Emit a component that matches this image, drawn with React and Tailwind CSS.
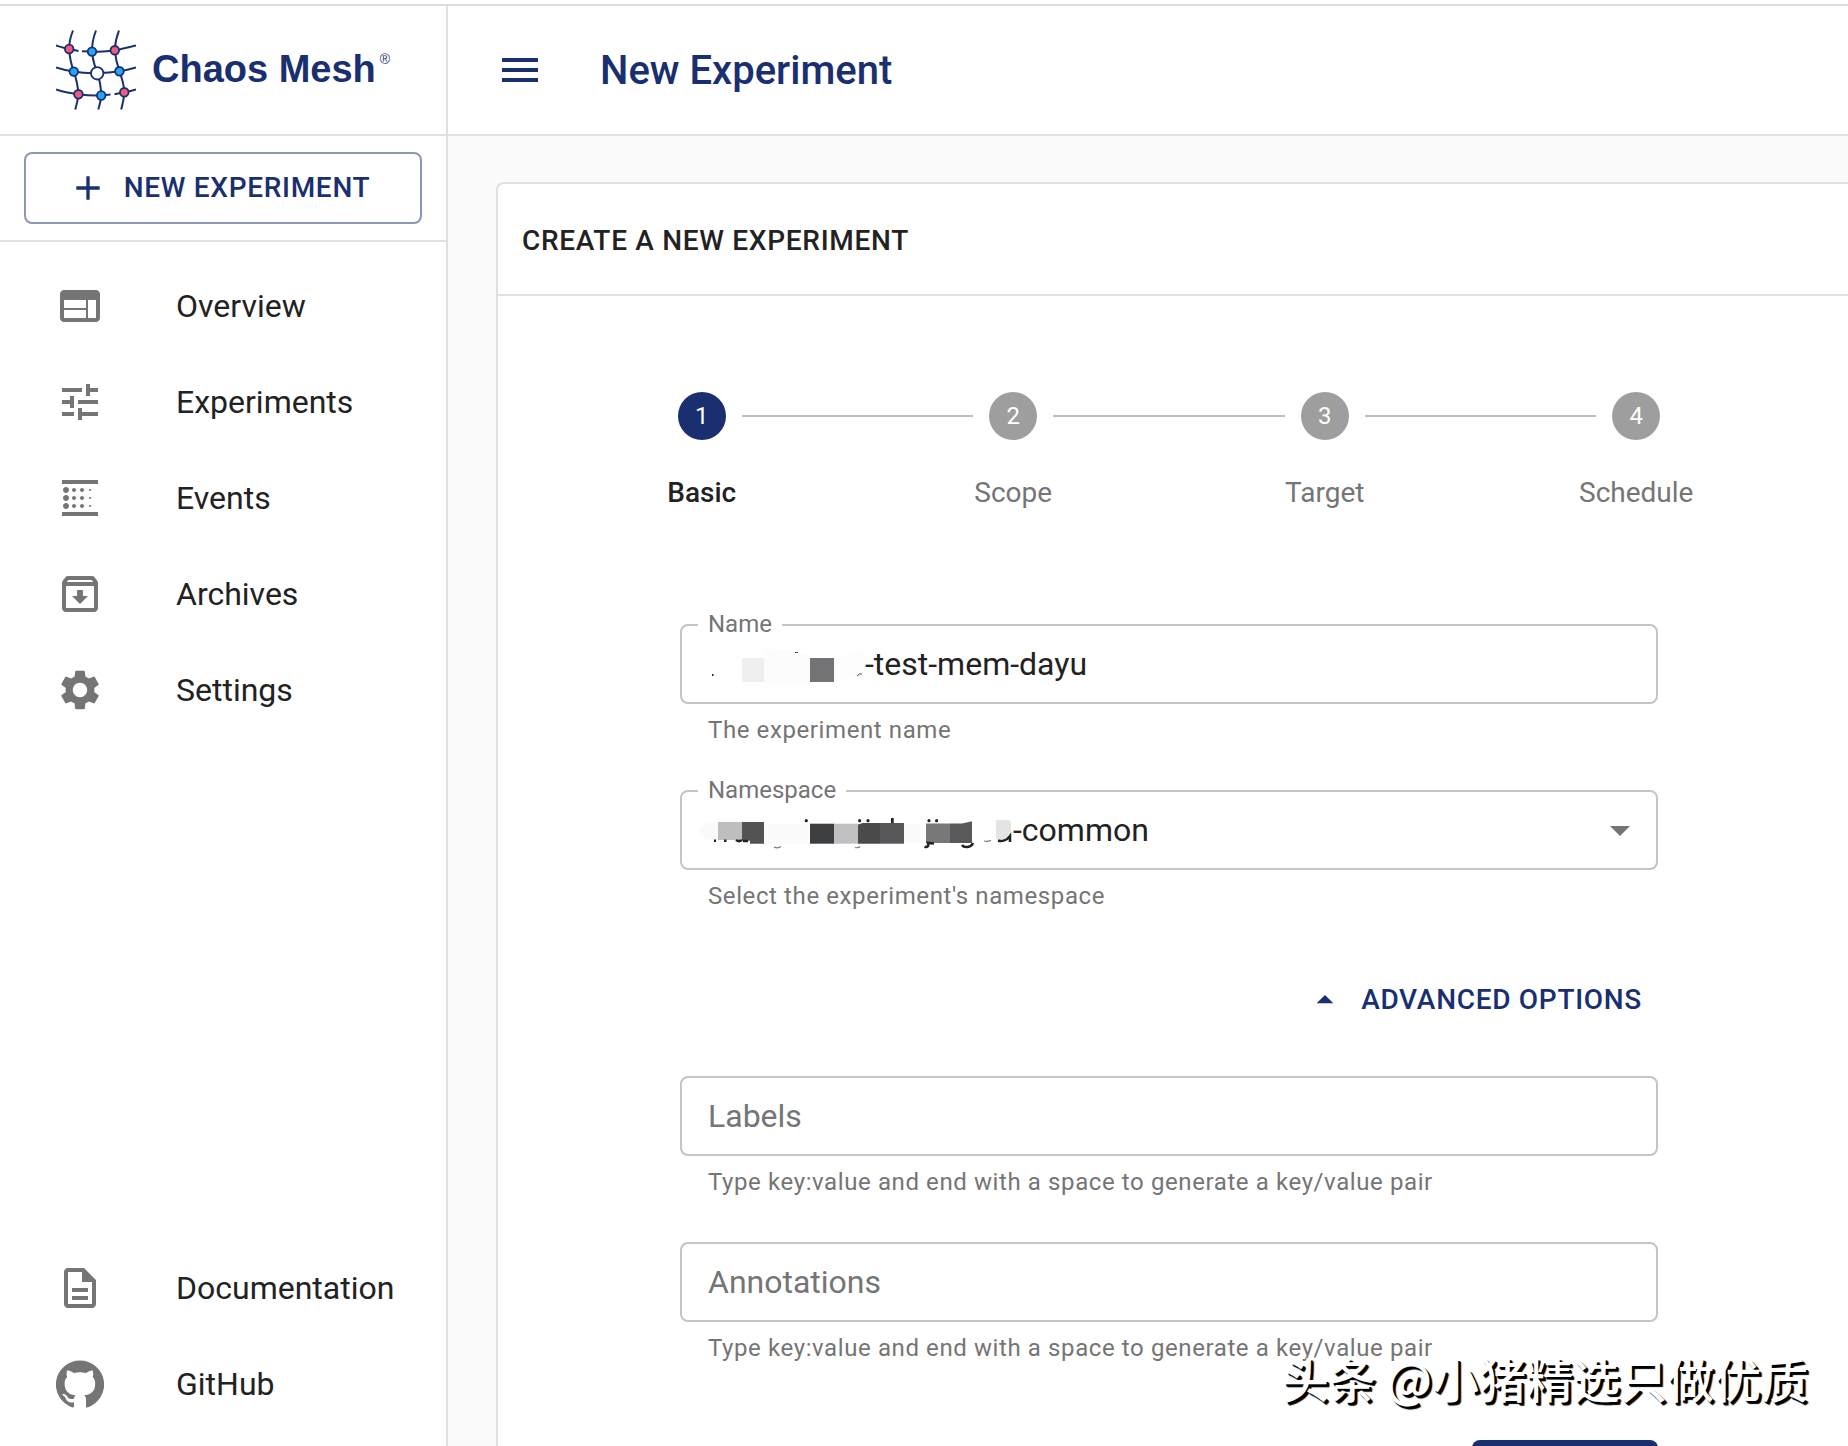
import React from "react";
import {
  MdAdd,
  MdArrowDropDown,
  MdArrowDropUp,
  MdBlurLinear,
  MdMenu,
  MdOutlineArchive,
  MdOutlineDescription,
  MdSettings,
  MdTune,
  MdWeb,
} from "react-icons/md";

function GitHubIcon({ className }) {
  return (
    <svg viewBox="0 0 24 24" className={className} fill="currentColor" aria-hidden="true">
      <path d="M12 .3a12 12 0 0 0-3.8 23.4c.6.1.8-.3.8-.6v-2c-3.3.7-4-1.6-4-1.6-.6-1.4-1.4-1.8-1.4-1.8-1-.7.1-.7.1-.7 1.2 0 1.9 1.2 1.9 1.2 1 1.8 2.8 1.3 3.5 1 0-.8.4-1.3.7-1.6-2.7-.3-5.5-1.3-5.5-6 0-1.2.5-2.3 1.3-3.1-.2-.4-.6-1.6 0-3.2 0 0 1-.3 3.4 1.2a11.5 11.5 0 0 1 6 0c2.3-1.5 3.3-1.2 3.3-1.2.6 1.6.2 2.8 0 3.2.9.8 1.3 1.9 1.3 3.2 0 4.6-2.8 5.6-5.5 5.9.5.4.9 1 .9 2.2v3.3c0 .3.1.7.8.6A12 12 0 0 0 12 .3" />
    </svg>
  );
}

const PINK = "#f2597f";
const BLUE = "#25a5f7";

const knots = [
  [29.2, 29, 4.3, PINK],
  [52, 31.6, 4.3, BLUE],
  [74.8, 30.3, 4.3, PINK],
  [33.8, 51.6, 4.3, BLUE],
  [57.2, 53.3, 6.2, "#fff"],
  [79.4, 51.3, 4.3, BLUE],
  [38.4, 74.3, 4.3, PINK],
  [61.2, 75.5, 4.3, BLUE],
  [84.3, 72.3, 4.3, PINK],
];

function Logo() {
  return (
    <svg viewBox="16 10 80 80" className="size-20 shrink-0" fill="none" stroke="#1a2f6f" strokeWidth="2" aria-hidden="true">
      <path d="M33 10.500C30 18 29 24 29.200 29C29.600 37 31 44 33.800 51.600C36 58 38 66 38.400 74.300C38 81 36.500 85 35.200 89.500" />
      <path d="M56 10.500C53 18 52 25 52 31.600C52.500 40 55 46 57.200 53.300C60 60 61 68 61.200 75.500C61 81 59.500 85 58.300 89.500" />
      <path d="M79 10.500C76 18 75 24 74.800 30.300C75.500 38 77 44 79.400 51.300C82 58 84 65 84.300 72.300C84 80 82.500 85 81.200 89.500" />
      <path d="M16 25.500C21 27 25 28.300 29.200 29L38.500 31M42 31.200L52 31.600C60 32 68 31.600 74.800 30.300C82 29 89 27.300 96 25.500" />
      <path d="M16 47.500C22 49.500 28 50.700 33.800 51.600C41 53 49 53.500 57.200 53.300C65 53 73 52.300 79.400 51.300C85 50.400 91 49 96 47.500" />
      <path d="M16 69.500C23 72 30 73.300 38.400 74.300C46 75.400 54 75.800 61.200 75.500L70.500 74.600M74.500 74.200L84.300 72.300C89 71.500 93 70.500 96 69.500" />
      {knots.map(([cx, cy, r, fill]) => (
        <circle key={cx} cx={cx} cy={cy} r={r} fill={fill} strokeWidth="1.8" />
      ))}
    </svg>
  );
}

function NameMosaic() {
  return (
    <svg viewBox="0 -14 175 76" className="h-[76px] w-[175px] shrink-0" aria-hidden="true">
      <path d="M74 8.500L95 10L120 15V43H74z" fill="#fcfcfc" />
      <path d="M165 12L175 9V34L144 42V18z" fill="#fdfdfd" />
      <rect x="52" y="18" width="22" height="24" fill="#efefef" />
      <rect x="120" y="18" width="24" height="24" fill="#737375" />
      <rect x="22" y="34" width="1.500" height="2" fill="#222" />
      <rect x="105" y="12" width="3" height="1" fill="#444" />
      <path d="M167 36L170 33.500M170 34H172" stroke="#555" />
    </svg>
  );
}

function NamespaceMosaic() {
  return (
    <svg viewBox="0 -8 323 76" className="h-[76px] w-[323px] shrink-0" aria-hidden="true">
      <path d="M28 22C14 22 10 27 10 31C10 36 15 40 28 40z" fill="#fafafa" />
      <rect x="28" y="22" width="24" height="18" fill="#bebebe" />
      <path d="M52 22H74V43.700H60V40.700H52z" fill="#535355" />
      <rect x="74" y="24" width="46" height="20" fill="#fbfbfb" />
      <rect x="214" y="24" width="22" height="19" fill="#fbfbfb" />
      <rect x="120" y="23.700" width="24" height="20" fill="#3e3f41" />
      <rect x="144" y="23.700" width="24" height="20" fill="#c0c0c2" />
      <path d="M168 24.500L173 23H190V43.700H168z" fill="#4b4b4b" />
      <rect x="190" y="23" width="24" height="20.700" fill="#58585a" />
      <rect x="236" y="23.500" width="24" height="19.500" fill="#78787a" />
      <path d="M260 23.500H272L282 21.200V43H260z" fill="#58595b" />
      {[116.300, 169.600, 178, 239, 246.600].map((cx) => (
        <circle key={cx} cx={cx} cy="20.700" r="1.600" fill="#222" />
      ))}
      <rect x="201" y="18" width="2.700" height="5" fill="#222" />
      <g fill="none" stroke="#222" strokeWidth="2.500">
        <path d="M24 40.700H26M34 40.700H36.500M46 40C48 41.500 50 41.500 52 40M53 41H58" />
        <path d="M244 43.500L238 43C239 46.500 237 47.500 234.500 46.700" strokeWidth="2.600" />
        <path d="M272 45C274 48 281 48 283 43" />
        <path d="M308 40.500C312 42 317 40 320 36V42" />
      </g>
      <path d="M84 47C86 48 89 48 91 46.500M165 47.500C167 48 169 47.500 170 46.500M294 41C296 41.500 299 41.200 301 40.500" fill="none" stroke="#777" strokeWidth="1.200" />
      <path d="M306 20H318C320 20 321 22 321 24V32L315 39H306z" fill="#e4e4e4" />
    </svg>
  );
}

const mainLinks = [
  ["Overview", MdWeb],
  ["Experiments", MdTune],
  ["Events", MdBlurLinear],
  ["Archives", MdOutlineArchive],
  ["Settings", MdSettings],
];

const footerLinks = [
  ["Documentation", MdOutlineDescription],
  ["GitHub", GitHubIcon],
];

function NavList({ links }) {
  return (
    <ul className="pt-4 pb-3.5">
      {links.map(([label, Icon]) => (
        <li key={label}>
          <a href="#" className="flex h-24 items-center gap-[72px] pl-14 text-[32px]">
            <Icon className="size-12 shrink-0 text-[#757575]" />
            {label}
          </a>
        </li>
      ))}
    </ul>
  );
}

function Sidebar() {
  return (
    <aside className="flex w-[448px] shrink-0 flex-col border-r-2 border-[#e0e0e0] bg-white">
      <a
        href="#"
        className="flex h-[130px] shrink-0 items-center gap-4 border-b-2 border-[#e0e0e0] pl-14 font-['Liberation_Sans',sans-serif] text-[38px] font-bold text-[#1a2f6f]"
      >
        <Logo />
        <span className="flex items-start gap-1 pb-0.5 leading-10">
          Chaos Mesh
          <span className="text-sm font-normal leading-5">®</span>
        </span>
      </a>
      <div className="border-b-2 border-[#e0e0e0] px-6 py-4">
        <button
          type="button"
          className="flex h-[72px] w-full items-center justify-center gap-4 rounded-lg border-2 border-[#8c97b7] pr-2 text-[28px] font-medium tracking-wide text-[#1a2f6f] uppercase"
        >
          <MdAdd className="size-10" />
          New Experiment
        </button>
      </div>
      <nav className="flex flex-1 flex-col justify-between" aria-label="Main">
        <NavList links={mainLinks} />
        <NavList links={footerLinks} />
      </nav>
    </aside>
  );
}

function Stepper() {
  const steps = ["Basic", "Scope", "Target", "Schedule"];
  return (
    <ol className="grid grid-cols-4">
      {steps.map((step, i) => (
        <li key={step} className="flex flex-col items-center gap-8">
          <div className="flex w-full items-center gap-4">
            <span className={i === 0 ? "flex-1" : "h-0.5 flex-1 bg-[#bdbdbd]"} />
            <span
              className={
                i === 0
                  ? "flex size-12 items-center justify-center rounded-full bg-[#1a2f6f] text-2xl text-white"
                  : "flex size-12 items-center justify-center rounded-full bg-[#9e9e9e] text-2xl text-white"
              }
            >
              {i + 1}
            </span>
            <span className={i === steps.length - 1 ? "flex-1" : "h-0.5 flex-1 bg-[#bdbdbd]"} />
          </div>
          <span className={i === 0 ? "text-[28px] leading-[42px] font-medium" : "text-[28px] leading-[42px] text-[#757575]"}>
            {step}
          </span>
        </li>
      ))}
    </ol>
  );
}

function Field({ id, label, help, children }) {
  return (
    <div>
      <div className="relative flex h-20 items-center rounded-lg border-2 border-[#c4c4c4] text-[32px]">
        {label && (
          <label htmlFor={id} className="absolute -top-5 left-4 bg-white px-2.5 text-2xl leading-9 text-[#757575]">
            {label}
          </label>
        )}
        {children}
      </div>
      <p id={id + "-help"} className="mt-1.5 pl-7 text-2xl leading-10 tracking-wide text-[#757575]">
        {help}
      </p>
    </div>
  );
}

function ExperimentForm() {
  const pairHelp = "Type key:value and end with a space to generate a key/value pair";
  return (
    <form className="mx-auto mt-[110px] w-full max-w-[978px]">
      <div className="flex flex-col gap-10">
        <Field id="name" label="Name" help="The experiment name">
          <div className="flex w-full pl-2">
            <NameMosaic />
            <input id="name" aria-describedby="name-help" defaultValue="-test-mem-dayu" className="min-w-0 flex-1 outline-none" />
          </div>
        </Field>
        <Field id="namespace" label="Namespace" help="Select the experiment's namespace">
          <div className="flex w-full items-center pr-3 pl-2">
            <NamespaceMosaic />
            <select id="namespace" aria-describedby="namespace-help" className="min-w-0 flex-1 appearance-none outline-none">
              <option>-common</option>
            </select>
            <MdArrowDropDown className="size-12 text-[#757575]" />
          </div>
        </Field>
      </div>
      <div className="mt-12 mb-10 flex justify-end">
        <button
          type="button"
          className="flex h-[72px] items-center gap-4 pr-4 text-[28px] font-medium tracking-wide text-[#1a2f6f] uppercase"
        >
          <MdArrowDropUp className="size-10" />
          Advanced Options
        </button>
      </div>
      <div className="flex flex-col gap-10">
        <Field id="labels" help={pairHelp}>
          <input
            id="labels"
            aria-label="Labels"
            aria-describedby="labels-help"
            placeholder="Labels"
            className="w-full px-[26px] outline-none placeholder:text-[#757575]"
          />
        </Field>
        <Field id="annotations" help={pairHelp}>
          <input
            id="annotations"
            aria-label="Annotations"
            aria-describedby="annotations-help"
            placeholder="Annotations"
            className="w-full px-[26px] outline-none placeholder:text-[#757575]"
          />
        </Field>
      </div>
      <div className="mt-[72px] flex justify-end">
        <button type="submit" aria-label="Next" className="h-[72px] w-[186px] rounded-lg bg-[#1a2f6f] shadow-md" />
      </div>
    </form>
  );
}

export default function App() {
  return (
    <div className="flex h-screen flex-col overflow-hidden bg-white pt-1 font-[Roboto,sans-serif] text-[#222222]">
      <div className="flex min-h-0 flex-1 border-t-2 border-[#dcdce0]">
        <Sidebar />
        <div className="flex min-w-0 flex-1 flex-col">
          <header className="flex h-[130px] shrink-0 items-center gap-14 border-b-2 border-[#e0e0e0] bg-white pl-12 text-[#1a2f6f]">
            <button type="button" aria-label="Toggle menu">
              <MdMenu className="size-12" />
            </button>
            <h1 className="pt-0.5 text-[40px] font-medium">New Experiment</h1>
          </header>
          <main className="min-h-0 flex-1 overflow-hidden bg-[#fafafa] pt-[46px] pl-12">
            <section className="rounded-tl-lg border-t-2 border-l-2 border-[#e0e0e0] bg-white">
              <h2 className="flex h-[112px] items-center border-b-2 border-[#e0e0e0] pt-1 pl-6 text-[28px] font-medium tracking-wide uppercase">
                Create a New Experiment
              </h2>
              <div className="pt-24 pr-14 pb-12 pl-12">
                <Stepper />
                <ExperimentForm />
              </div>
            </section>
          </main>
        </div>
      </div>
      <p className="pointer-events-none absolute right-10 bottom-8 font-['Noto_Sans_CJK_SC',sans-serif] text-[47px] leading-[72px] font-medium text-white [text-shadow:2px_2px_0_black,3px_3px_1px_black]">
        头条 @小猪精选只做优质
      </p>
    </div>
  );
}
